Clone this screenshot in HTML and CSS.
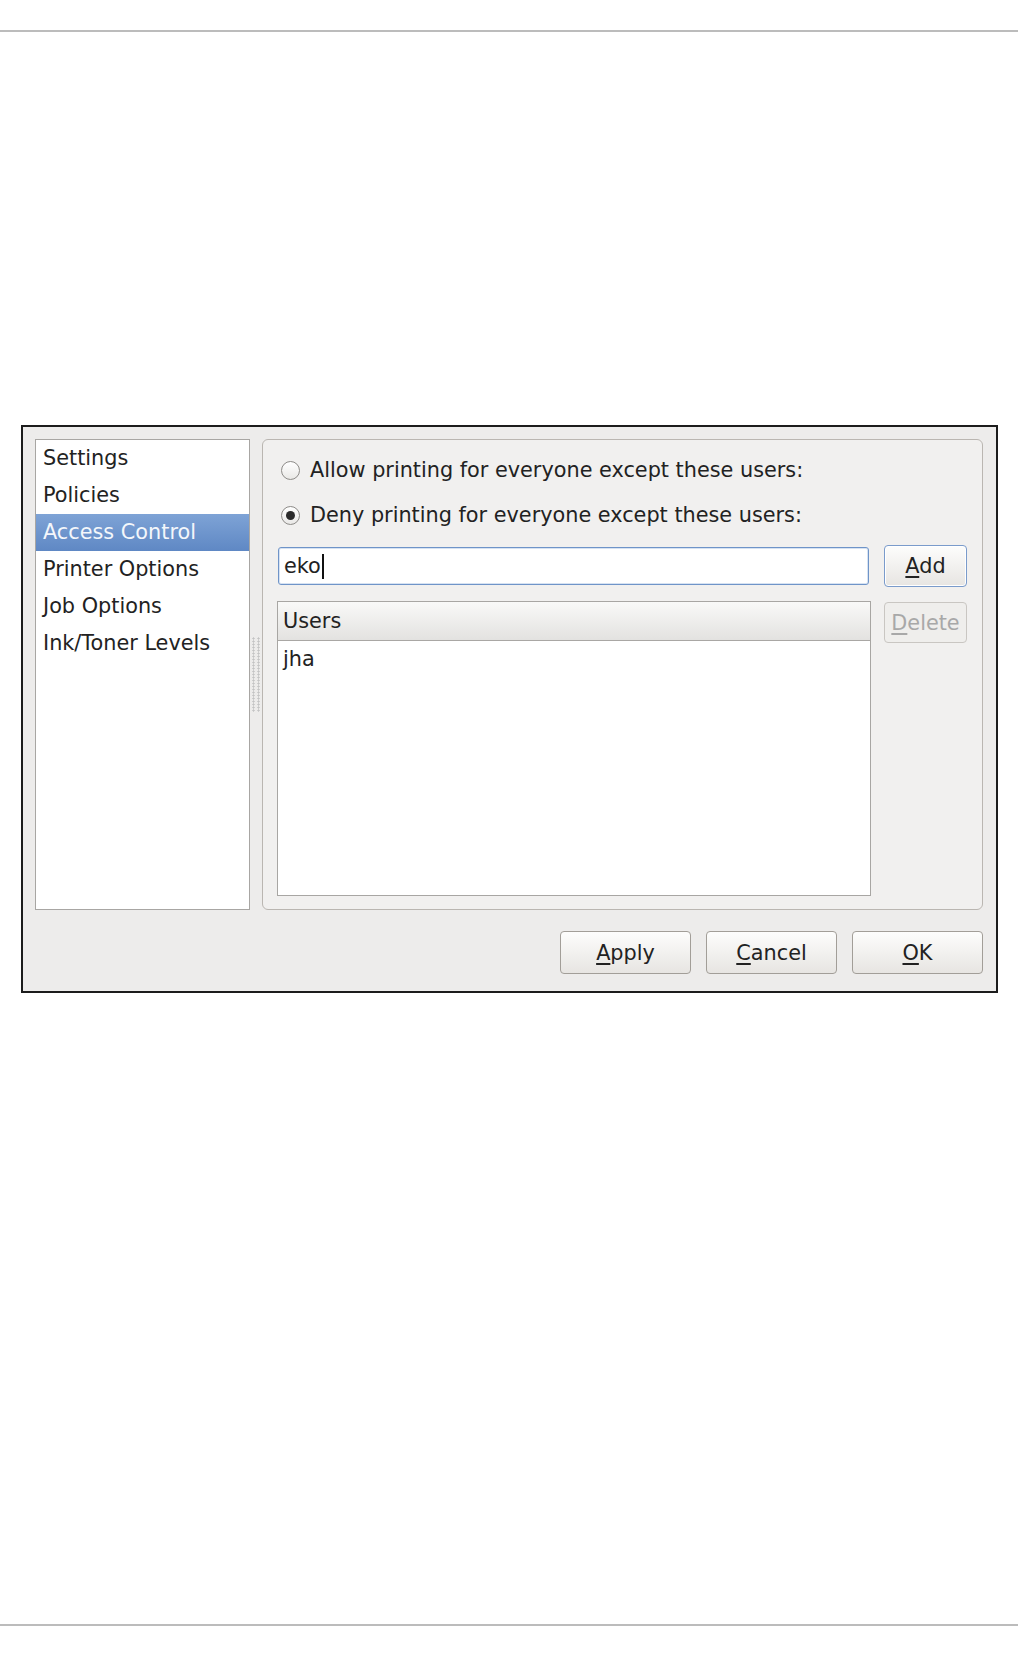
FILE: index.html
```html
<!DOCTYPE html>
<html lang="en">
<head>
    <meta charset="UTF-8">
    <meta name="viewport" content="width=device-width, initial-scale=1.0">
    <title>Printer Properties - Access Control</title>
    <link rel="stylesheet" href="styles.css">
</head>
<body>
    <div class="rule rule-top"></div>
    <div class="dialog">
        <div class="panes">
            <ul class="sidebar">
                <li>Settings</li>
                <li>Policies</li>
                <li class="selected">Access Control</li>
                <li>Printer Options</li>
                <li>Job Options</li>
                <li>Ink/Toner Levels</li>
            </ul>
            <div class="handle"><div class="grip"></div></div>
            <div class="frame">
                <label class="radio"><span class="dot"></span>Allow printing for everyone except these users:</label>
                <label class="radio"><span class="dot on"></span>Deny printing for everyone except these users:</label>
                <div class="users">
                    <div class="entry">eko<span class="caret"></span></div>
                    <button class="btn btn-focus"><u>A</u>dd</button>
                    <div class="list">
                        <div class="list-head">Users</div>
                        <div class="list-row">jha</div>
                    </div>
                    <button class="btn btn-off"><u>D</u>elete</button>
                </div>
            </div>
        </div>
        <div class="actions">
            <button class="btn"><u>A</u>pply</button>
            <button class="btn"><u>C</u>ancel</button>
            <button class="btn"><u>O</u>K</button>
        </div>
    </div>
    <div class="rule rule-bottom"></div>
</body>
</html>
```
FILE: styles.css
```css
body {
    margin: 0;
    background: #fff;
    font-family: "DejaVu Sans", "Liberation Sans", sans-serif;
    font-size: 20.8px;
    color: #222;
}
.rule {
    height: 2px;
    width: 1018px;
    background: #bcbcbc;
}
.rule-top {
    margin-top: 30px;
}
.rule-bottom {
    margin-top: 631px;
}
.dialog {
    box-sizing: border-box;
    width: 977px;
    height: 568px;
    margin: 393px 0 0 21px;
    padding: 12px 13px 17px 12px;
    border: 2px solid #1c1c1c;
    background: #edeceb;
}
.panes {
    display: flex;
    height: 471px;
}
.sidebar {
    box-sizing: border-box;
    width: 215px;
    margin: 0;
    padding: 0;
    list-style: none;
    border: 1px solid #a8a6a3;
    background: #fff;
}
.sidebar li {
    height: 37px;
    line-height: 37px;
    padding-left: 7px;
    white-space: nowrap;
}
.sidebar li.selected {
    color: #f4f7fb;
    background: linear-gradient(#7ea3d6, #5f88c4);
}
.handle {
    width: 12px;
    display: flex;
    align-items: center;
    justify-content: center;
}
.grip {
    width: 10px;
    height: 75px;
    background-image: radial-gradient(circle, #c4c4c4 0.9px, transparent 1.3px);
    background-size: 5px 3px;
}
.frame {
    flex: 1;
    box-sizing: border-box;
    padding: 12px 15px 13px 14px;
    border: 1px solid #bab6b1;
    border-radius: 6px;
    background: #f1f0ef;
}
.radio {
    display: flex;
    align-items: center;
    height: 36px;
    white-space: nowrap;
}
.radio + .radio {
    margin-top: 9px;
}
.dot {
    position: relative;
    box-sizing: border-box;
    width: 19px;
    height: 19px;
    margin: 0 10px 0 4px;
    border: 1px solid #8d8b88;
    border-radius: 50%;
    background: linear-gradient(#fff, #e9e8e6);
}
.dot.on::after {
    content: "";
    position: absolute;
    top: 4px;
    left: 4px;
    width: 9px;
    height: 9px;
    border-radius: 50%;
    background: #2b2b2b;
}
.users {
    display: grid;
    grid-template-columns: 1fr 83px;
    grid-template-rows: 42px 295px;
    column-gap: 13px;
    row-gap: 14px;
    margin-top: 12px;
}
.entry {
    align-self: center;
    box-sizing: border-box;
    height: 38px;
    margin: 0 2px 0 1px;
    padding-left: 5px;
    display: flex;
    align-items: center;
    border: 1px solid #6f94c8;
    border-radius: 3px;
    background: #fff;
    box-shadow: inset 0 0 0 1px #d6e2f2;
}
.caret {
    display: inline-block;
    width: 2px;
    height: 25px;
    margin-left: 1px;
    background: #111;
}
.btn {
    box-sizing: border-box;
    padding: 0;
    font-family: inherit;
    font-size: inherit;
    color: #222;
    border: 1px solid #a29e98;
    border-radius: 4px;
    background: linear-gradient(#fdfdfc, #e7e5e2);
}
.btn u {
    text-decoration-thickness: 1.5px;
    text-underline-offset: 3px;
}
.btn-focus {
    border-color: #7a9bcb;
    box-shadow: inset 0 0 0 1px #fff;
}
.btn-off {
    height: 41px;
    margin-top: 1px;
    color: #a8a8a8;
    border-color: #c9c6c2;
    background: #efeeec;
}
.list {
    box-sizing: border-box;
    border: 1px solid #a8a6a3;
    background: #fff;
}
.list-head {
    height: 38px;
    line-height: 38px;
    padding-left: 5px;
    border-bottom: 1px solid #a9a7a4;
    background: linear-gradient(#f9f9f8, #e3e2e0);
}
.list-row {
    height: 36px;
    line-height: 36px;
    padding-left: 5px;
}
.actions {
    display: flex;
    justify-content: flex-end;
    gap: 15px;
    margin-top: 21px;
}
.actions .btn {
    width: 131px;
    height: 43px;
}
```
